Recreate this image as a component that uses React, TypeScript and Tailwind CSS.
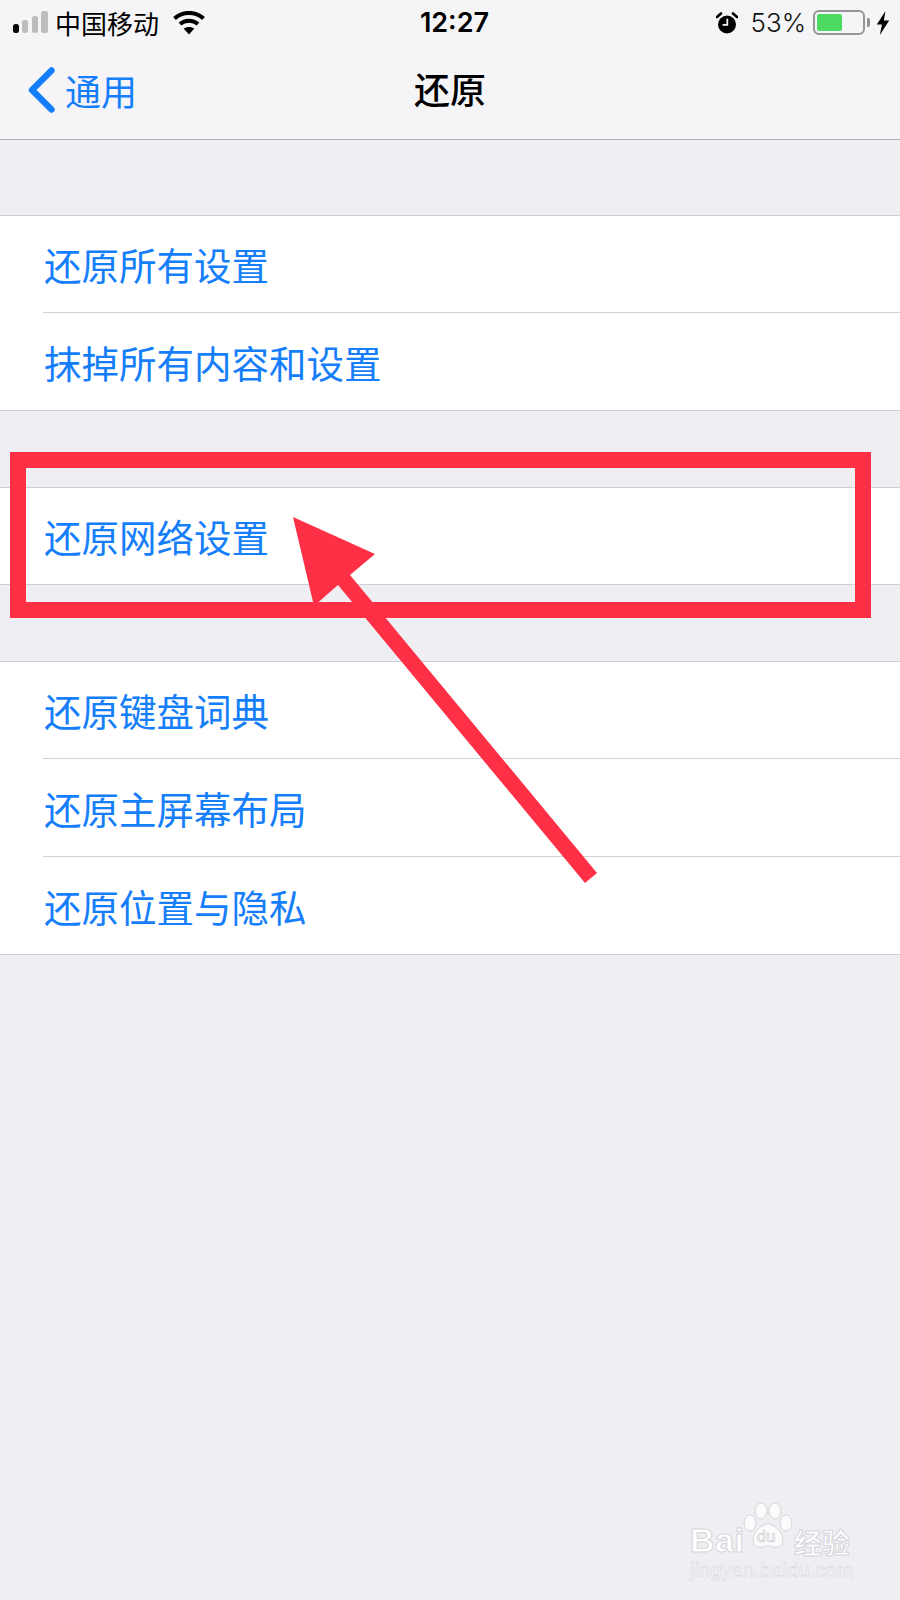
const CJK = `font-['Noto_Sans_CJK_SC','Liberation_Sans',sans-serif]`;

function SignalBars() {
  return (
    <svg width="36" height="24" viewBox="0 0 36 24" className="shrink-0">
      <rect x="0" y="13" width="6" height="9" rx="2.5" fill="#0a0a0a" />
      <rect x="9" y="9" width="6" height="13" rx="2.5" fill="#bdbdbf" />
      <rect x="19" y="5" width="6" height="17" rx="2.5" fill="#bdbdbf" />
      <rect x="28" y="0" width="7" height="22" rx="2.5" fill="#bdbdbf" />
    </svg>
  );
}

function Wifi() {
  return (
    <svg width="32" height="24" viewBox="0 0 32 24" className="shrink-0">
      <path d="M1.5 7.5C9.5 0 22.5 0 30.5 7.5" fill="none" stroke="#000" strokeWidth="4" />
      <path d="M7 13C12 8.6 20 8.6 25 13" fill="none" stroke="#000" strokeWidth="4" />
      <path d="M16 23.5 10.6 17.6C13.8 15.3 18.2 15.3 21.4 17.6Z" fill="#000" />
    </svg>
  );
}

function Alarm() {
  return (
    <svg width="22" height="22" viewBox="0 0 22 22" className="shrink-0">
      <circle cx="11" cy="12.5" r="9" fill="#000" />
      <path d="M1 5 5 1.5" stroke="#000" strokeWidth="2.6" strokeLinecap="round" />
      <path d="M21 5 17 1.5" stroke="#000" strokeWidth="2.6" strokeLinecap="round" />
      <path d="M11.3 6.8V12.8H6.6" fill="none" stroke="#f5f5f8" strokeWidth="1.8" />
    </svg>
  );
}

function Battery() {
  return (
    <div className="flex items-center shrink-0">
      <div className="w-[52px] h-[25px] rounded-[6px] border-2 border-[#959597] p-[2px] flex">
        <div className="w-[25px] h-full rounded-[2px] bg-[#4cd964]" />
      </div>
      <div className="ml-[2px] w-[3px] h-[9px] rounded-r-[2px] bg-[#959597]" />
    </div>
  );
}

function Bolt() {
  return (
    <svg width="14" height="24" viewBox="0 0 14 24" className="shrink-0">
      <path d="M9.5 0 0.8 13.4H6L3.8 24 13.2 9.6H7.8Z" fill="#000" />
    </svg>
  );
}

function Chevron() {
  return (
    <svg width="28" height="46" viewBox="0 0 28 46" className="shrink-0">
      <path d="M24.5 3.5 5 23 24.5 42.5" fill="none" stroke="#157efb" strokeWidth="6.4" strokeLinecap="round" strokeLinejoin="round" />
    </svg>
  );
}

function Row({ label, h, sep }: { label: string; h: string; sep?: boolean }) {
  return (
    <div className={`${h} pl-[43px] bg-white`}>
      <div className={`h-full flex items-center ${sep ? "border-b border-[#d2d2d6]" : ""}`}>
        <span className="ml-[1px] text-[37.5px] leading-none font-normal text-[#157efb]">{label}</span>
      </div>
    </div>
  );
}

function Group({ children, mt }: { children: React.ReactNode; mt: string }) {
  return <div className={`${mt} border-y border-[#cfcfd3] bg-white`}>{children}</div>;
}

function Arrow() {
  return (
    <svg className="absolute left-0 top-0 pointer-events-none" width="900" height="1600" viewBox="0 0 900 1600">
      <path d="M293 517 375 554 350 575 597 873 585 883 338 585 314 606Z" fill="#ff3045" />
    </svg>
  );
}

function Watermark() {
  const stroke = "[-webkit-text-stroke:1px_#d6d6da] text-white";
  return (
    <div className="absolute left-[690px] top-[1500px] w-[170px] h-[84px] font-['Liberation_Sans',sans-serif]">
      <svg className="absolute left-[52px] top-0" width="50" height="50" viewBox="0 0 50 50">
        <g fill="#fbfbfc" stroke="#d6d6da" strokeWidth="1">
          <ellipse cx="8" cy="23" rx="6" ry="8" />
          <ellipse cx="19" cy="11" rx="6" ry="8" />
          <ellipse cx="33" cy="11" rx="6" ry="8" />
          <ellipse cx="44" cy="23" rx="6" ry="8" />
          <path d="M26 24C34 24 44 36 40 44 36 50 30 46 26 46 22 46 16 50 12 44 8 36 18 24 26 24Z" />
        </g>
        <text x="14.5" y="42" fontSize="17" fill="#fbfbfc" stroke="#d0d0d4" strokeWidth="0.7" fontFamily="Liberation Sans">du</text>
      </svg>
      <span className={`absolute left-0 top-[22px] text-[34px] leading-[36px] font-bold tracking-[0.5px] ${stroke}`}>Bai</span>
      <span className={`absolute left-[104px] top-[27px] text-[28px] leading-[30px] font-bold font-['Noto_Sans_CJK_SC',sans-serif] ${stroke}`}>经验</span>
      <span className="absolute left-0 top-[59px] text-[19.7px] leading-[23px] tracking-[0.3px] whitespace-nowrap text-[#fbfbfc] [-webkit-text-stroke:0.6px_#d6d6da]">jingyan.baidu.com</span>
    </div>
  );
}

export default function App() {
  return (
    <div className={`relative w-[900px] h-[1600px] overflow-hidden bg-[#eeeef3] ${CJK}`}>
      <header className="h-[140px] bg-[#f5f5f8] border-b border-[#b1b1b3] flex flex-col">
        <div className="h-[44px] pl-[13px] pr-[10px] grid grid-cols-3 items-center pt-[1px]">
          <div className="flex items-center">
            <SignalBars />
            <span className="ml-[6px] text-[26px] leading-none text-black whitespace-nowrap">中国移动</span>
            <span className="ml-[14px]"><Wifi /></span>
          </div>
          <div className="text-center text-[27px] leading-none font-semibold text-black font-['Inter',sans-serif] pl-[6px]">12:27</div>
          <div className="flex items-center justify-end">
            <Alarm />
            <span className="ml-[12px] text-[26px] leading-none text-[#111] font-['Inter',sans-serif] font-light">53%</span>
            <span className="ml-[7px]"><Battery /></span>
            <span className="ml-[6px]"><Bolt /></span>
          </div>
        </div>
        <div className="relative flex-1 flex items-center justify-center pb-[7px]">
          <div className="absolute left-[27px] top-[23px] flex items-center">
            <Chevron />
            <span className="ml-[10px] text-[36px] leading-none text-[#157efb]">通用</span>
          </div>
          <span className="text-[36px] leading-none font-medium text-black">还原</span>
        </div>
      </header>

      <Group mt="mt-[75px]">
        <Row label="还原所有设置" h="h-[97px]" sep />
        <Row label="抹掉所有内容和设置" h="h-[97px]" />
      </Group>
      <Group mt="mt-[76px]">
        <Row label="还原网络设置" h="h-[96px]" />
      </Group>
      <Group mt="mt-[76px]">
        <Row label="还原键盘词典" h="h-[97px]" sep />
        <Row label="还原主屏幕布局" h="h-[98px]" sep />
        <Row label="还原位置与隐私" h="h-[97px]" />
      </Group>

      <div className="absolute left-[10px] top-[452px] w-[861px] h-[166px] border-[16px] border-[#ff3045]" />
      <Arrow />
      <Watermark />
    </div>
  );
}
